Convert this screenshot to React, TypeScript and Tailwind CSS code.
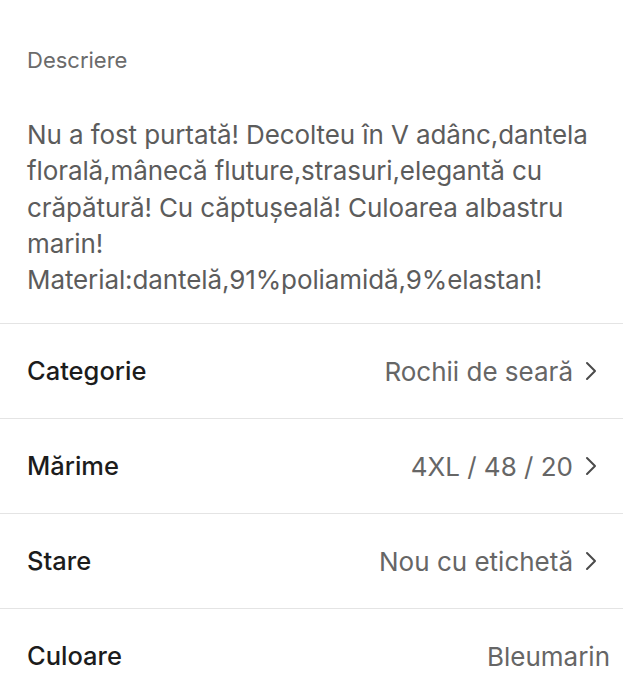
import React from "react";

const Chevron = () => (
  <svg width="14" height="20" viewBox="0 0 14 20" fill="none" className="ml-[11px] shrink-0">
    <path d="M3 2 L11 10 L3 18" stroke="#4a4a4a" strokeWidth="2" strokeLinecap="round" strokeLinejoin="round" />
  </svg>
);

const rows = [
  { label: "Categorie", value: "Rochii de seară", chevron: true },
  { label: "Mărime", value: "4XL / 48 / 20", chevron: true },
  { label: "Stare", value: "Nou cu etichetă", chevron: true },
  { label: "Culoare", value: "Bleumarin", chevron: false },
];

export default function App() {
  return (
    <div
      className="w-[623px] h-[699px] bg-white overflow-hidden"
      style={{ fontFamily: "Inter, 'Noto Sans', sans-serif" }}
    >
      <div className="px-[27px] pt-[46px]">
        <div className="text-[22px] leading-[28px] text-[#6b6b6b]">Descriere</div>
        <div className="mt-[43px] text-[26px] leading-[36.3px] text-[#5c5c5c] tracking-[-0.1px]">
          Nu a fost purtată! Decolteu în V adânc,dantela florală,mânecă fluture,strasuri,elegantă cu crăpătură! Cu căptușeală! Culoarea albastru marin!
          <br />
          Material:dantelă,91%poliamidă,9%elastan!
        </div>
      </div>
      <div className="mt-[25px]">
        {rows.map((r) => (
          <div key={r.label} className="border-t border-[#e4e4e4] h-[95px] flex items-center pl-[27px] pr-[13px]">
            <div className="text-[25.5px] font-medium text-[#1c1c1c]">{r.label}</div>
            <div className="ml-auto flex items-center">
              <span className="text-[26px] text-[#666666]">{r.value}</span>
              {r.chevron && <span className="mr-[12px] flex"><Chevron /></span>}
            </div>
          </div>
        ))}
      </div>
    </div>
  );
}
